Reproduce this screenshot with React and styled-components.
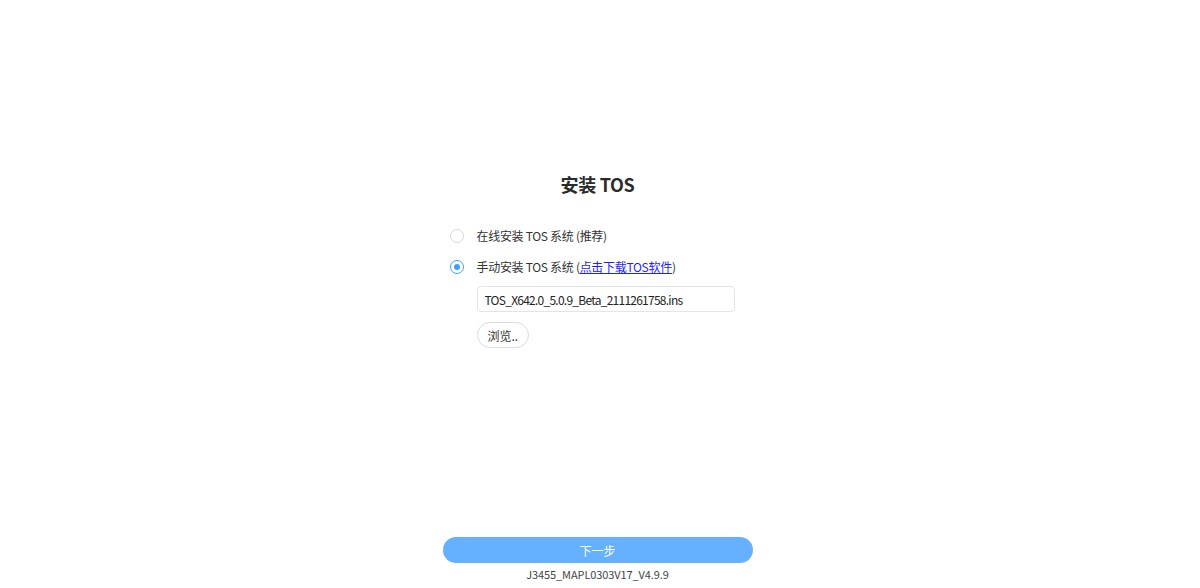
import React, { useState } from "react";
import styled, { createGlobalStyle } from "styled-components";

const GlobalStyle = createGlobalStyle`
  html, body {
    margin: 0;
    padding: 0;
    background: #fff;
  }
  body {
    font-family: "Noto Sans CJK SC", "Noto Sans", sans-serif;
    color: #333;
  }
`;

const Page = styled.div`
  display: flex;
  flex-direction: column;
  align-items: center;
  height: 588px;
  padding-right: 5px;
  box-sizing: border-box;
`;

const Main = styled.div`
  flex: 1;
  width: 310px;
  display: flex;
  flex-direction: column;
  padding-top: 169px;
`;

const Title = styled.h1`
  margin: 0 0 27px;
  font-size: 18px;
  font-weight: 700;
  letter-spacing: -0.3px;
  color: #2b2b2b;
  text-align: center;
  line-height: 30px;
`;

const Options = styled.div`
  display: flex;
  flex-direction: column;
  padding-left: 7px;
`;

const OptionRow = styled.label`
  display: flex;
  align-items: center;
  height: 20px;
  line-height: 20px;
  margin-bottom: ${props => (props.last ? "9px" : "11px")};
  font-size: 12px;
  letter-spacing: -0.3px;
  color: #333;
  cursor: pointer;
`;

const Radio = styled.span`
  flex-shrink: 0;
  width: 14px;
  height: 14px;
  box-sizing: border-box;
  border-radius: 50%;
  border: 1px solid ${props => (props.checked ? "#409eff" : "#d6d9de")};
  margin-right: 13px;
  display: flex;
  align-items: center;
  justify-content: center;

  &::after {
    content: "";
    width: 6px;
    height: 6px;
    border-radius: 50%;
    background: #409eff;
    display: ${props => (props.checked ? "block" : "none")};
  }
`;

const Link = styled.a`
  color: #1f1fff;
  text-decoration: underline;
`;

const FileBlock = styled.div`
  display: flex;
  flex-direction: column;
  align-items: flex-start;
  padding-left: 34px;
  gap: 10px;
`;

const FileInput = styled.input`
  width: 258px;
  height: 26px;
  box-sizing: border-box;
  border: 1px solid #e4e4e4;
  border-radius: 4px;
  padding: 0 7px;
  font-family: "Noto Sans CJK SC", "Noto Sans", sans-serif;
  font-size: 12px;
  letter-spacing: -0.75px;
  color: #222;
  outline: none;
`;

const BrowseButton = styled.button`
  height: 26px;
  padding: 0 10px;
  border: 1px solid #dcdcdc;
  border-radius: 13px;
  background: #fff;
  font-family: "Noto Sans CJK SC", "Noto Sans", sans-serif;
  font-size: 12px;
  color: #333;
  cursor: pointer;
`;

const Footer = styled.div`
  display: flex;
  flex-direction: column;
  align-items: center;
  padding-bottom: 6px;
`;

const NextButton = styled.button`
  width: 310px;
  height: 26px;
  border: none;
  border-radius: 13px;
  background: #66b1ff;
  color: #fff;
  font-family: "Noto Sans CJK SC", "Noto Sans", sans-serif;
  font-size: 12px;
  cursor: pointer;
`;

const Version = styled.div`
  margin-top: 3px;
  font-size: 11px;
  line-height: 16px;
  letter-spacing: -0.1px;
  color: #444;
`;

function App() {
  const [mode, setMode] = useState("manual");

  return (
    <>
      <GlobalStyle />
      <Page>
        <Main>
          <Title>安装 TOS</Title>
          <Options>
            <OptionRow onClick={() => setMode("online")}>
              <Radio checked={mode === "online"} />
              在线安装 TOS 系统 (推荐)
            </OptionRow>
            <OptionRow last onClick={() => setMode("manual")}>
              <Radio checked={mode === "manual"} />
              <span>
                手动安装 TOS 系统 (<Link href="#">点击下载TOS软件</Link>)
              </span>
            </OptionRow>
          </Options>
          <FileBlock>
            <FileInput readOnly value="TOS_X642.0_5.0.9_Beta_2111261758.ins" />
            <BrowseButton>浏览..</BrowseButton>
          </FileBlock>
        </Main>
        <Footer>
          <NextButton>下一步</NextButton>
          <Version>J3455_MAPL0303V17_V4.9.9</Version>
        </Footer>
      </Page>
    </>
  );
}

export default App;
